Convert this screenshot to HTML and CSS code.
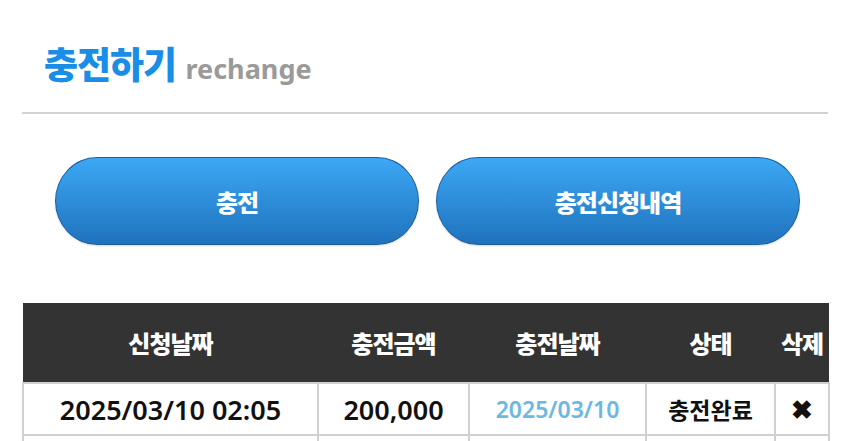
FILE: index.html
```html
<!DOCTYPE html>
<html lang="ko">
  <head>
    <meta charset="UTF-8" />
    <meta name="viewport" content="width=device-width, initial-scale=1.0" />
    <title>충전하기</title>
    <link rel="stylesheet" href="styles.css">
  </head>
  <body>
    <div class="page">
      <h2 class="title">충전하기 <span class="sub">rechange</span></h2>

      <div class="actions">
        <button class="pill">충전</button>
        <button class="pill">충전신청내역</button>
      </div>

      <table class="history">
        <tr>
          <th class="c-req">신청날짜</th>
          <th class="c-amt">충전금액</th>
          <th class="c-date">충전날짜</th>
          <th class="c-state">상태</th>
          <th class="c-del">삭제</th>
        </tr>
        <tr>
          <td>2025/03/10 02:05</td>
          <td>200,000</td>
          <td class="done-date">2025/03/10</td>
          <td class="state">충전완료</td>
          <td class="del">&#x2716;</td>
        </tr>
        <tr>
          <td>&nbsp;</td>
          <td></td>
          <td></td>
          <td></td>
          <td></td>
        </tr>
      </table>
    </div>
  </body>
</html>
```

FILE: styles.css
```css
body {
  margin: 0;
  font-family: "Noto Sans CJK KR", "Noto Sans", sans-serif;
  background: #fff;
}
.page {
  padding: 0 22px;
}
.title {
  margin: 0;
  box-sizing: border-box;
  height: 114px;
  padding: 40px 0 0 22px;
  font-size: 37px;
  font-weight: 900;
  line-height: 46px;
  color: #1a8ee6;
  border-bottom: 2px solid #d2d2d4;
  letter-spacing: -1px;
}
.sub {
  font-family: "Noto Sans", sans-serif;
  font-size: 27px;
  font-weight: 700;
  color: #9a9a9a;
  letter-spacing: 0;
  margin-left: 0;
}
.actions {
  display: flex;
  gap: 17px;
  padding: 43px 0 0 33px;
}
.pill {
  width: 364px;
  height: 88px;
  border: 1px solid #1c5f9e;
  border-radius: 44px / 46px;
  background: linear-gradient(#3ca8f5, #1f72bd);
  color: #fff;
  font-family: "Noto Sans CJK KR", sans-serif;
  font-size: 24px;
  font-weight: 900;
  letter-spacing: -1px;
  box-shadow: 0 1px 2px rgba(0, 0, 0, 0.15);
}
.history {
  margin-top: 58px;
  width: 806px;
  border-collapse: collapse;
  table-layout: fixed;
}
.history th {
  background: #333;
  color: #fff;
  height: 79px;
  font-size: 24px;
  font-weight: 900;
  letter-spacing: -1px;
  padding: 0;
  text-align: center;
}
.history td {
  border: 2px solid #d0d0d0;
  height: 50px;
  padding: 0;
  text-align: center;
  font-family: "Noto Sans", "Noto Sans CJK KR", sans-serif;
  font-size: 27px;
  font-weight: 600;
  color: #111;
}
.c-req { width: 295px; }
.c-amt { width: 151px; }
.c-date { width: 177px; }
.c-state { width: 129px; }
.c-del { width: 54px; }
.history .done-date {
  color: #6cb8e4;
  font-size: 23px;
}
.history .state {
  font-size: 23px;
  font-weight: 700;
}
.history .del {
  font-size: 26px;
}
```
